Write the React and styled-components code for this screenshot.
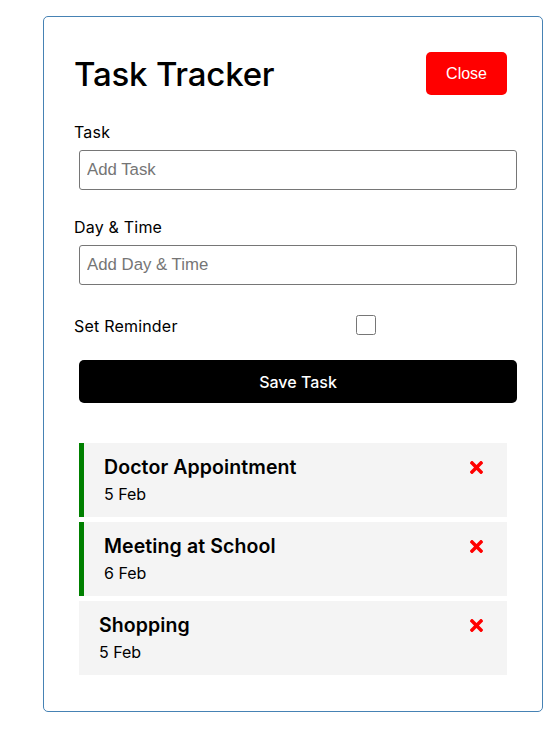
import React from "react";
import styled, { createGlobalStyle } from "styled-components";
import { FaTimes } from "react-icons/fa";

const GlobalStyle = createGlobalStyle`
  * {
    box-sizing: border-box;
  }

  body {
    margin: 0;
    background: #fff;
    font-family: Inter, "Open Sans", sans-serif;
    color: #000;
  }
`;

const Container = styled.div`
  width: 500px;
  min-height: 300px;
  margin: 16px 0 0 43px;
  padding: 30px 30px 31px;
  border: 1px solid steelblue;
  border-radius: 5px;
`;

const Header = styled.header`
  display: flex;
  justify-content: space-between;
  align-items: center;
  margin-bottom: 20px;
`;

const Title = styled.h1`
  margin: 0;
  font-size: 33px;
  font-weight: 500;
  letter-spacing: -0.2px;
`;

const Button = styled.button`
  display: ${(p) => (p.$block ? "block" : "inline-block")};
  width: ${(p) => (p.$block ? "100%" : "auto")};
  height: 43px;
  margin: 5px;
  padding: 0 20px;
  border: none;
  border-radius: 5px;
  background: ${(p) => p.$color || "#000"};
  color: #fff;
  font-family: ${(p) =>
    p.$block ? "Inter, sans-serif" : '"Liberation Sans", Arial, sans-serif'};
  font-size: 16px;
  font-weight: ${(p) => (p.$block ? 500 : 400)};
  cursor: pointer;
`;

const Form = styled.form`
  margin-bottom: 40px;
`;

const FormControl = styled.div`
  display: flow-root;
  margin: 20px 0;
`;

const Label = styled.label`
  display: block;
  font-size: 16px;
  line-height: 25px;
  letter-spacing: 0.2px;
`;

const Input = styled.input`
  display: block;
  width: 100%;
  height: 40px;
  margin: 5px;
  padding: 3px 7px;
  border: 1px solid #767676;
  border-radius: 3px;
  font-family: "Liberation Sans", Arial, sans-serif;
  font-size: 16.8px;

  &::placeholder {
    color: #757575;
  }
`;

const CheckRow = styled.div`
  display: flex;
  align-items: center;
  height: 30px;
  margin: 20px 0;

  ${Label} {
    flex: 1;
    padding-top: 2px;
  }
`;

const CheckCell = styled.div`
  flex: 2;
  display: flex;
  justify-content: center;
`;

const Checkbox = styled.input`
  width: 20px;
  height: 20px;
  margin: 0;
`;

const Task = styled.div`
  margin: 5px;
  padding: 10px 20px;
  background: #f4f4f4;
  border-left: ${(p) => (p.$reminder ? "5px solid green" : "none")};
  cursor: pointer;
`;

const TaskTitle = styled.h3`
  display: flex;
  justify-content: space-between;
  align-items: center;
  margin: 0;
  font-size: 19.5px;
  font-weight: 600;
  line-height: 28px;
  letter-spacing: 0.1px;

  svg {
    margin-right: 1px;
    color: red;
  }
`;

const TaskDay = styled.p`
  margin: 0;
  font-size: 16px;
  line-height: 26px;
`;

const tasks = [
  { id: 1, text: "Doctor Appointment", day: "5 Feb", reminder: true },
  { id: 2, text: "Meeting at School", day: "6 Feb", reminder: true },
  { id: 3, text: "Shopping", day: "5 Feb", reminder: false },
];

const App = () => {
  return (
    <>
      <GlobalStyle />
      <Container>
        <Header>
          <Title>Task Tracker</Title>
          <Button type="button" $color="red">
            Close
          </Button>
        </Header>

        <Form onSubmit={(e) => e.preventDefault()}>
          <FormControl>
            <Label>Task</Label>
            <Input type="text" placeholder="Add Task" />
          </FormControl>
          <FormControl>
            <Label>Day &amp; Time</Label>
            <Input type="text" placeholder="Add Day & Time" />
          </FormControl>
          <CheckRow>
            <Label>Set Reminder</Label>
            <CheckCell>
              <Checkbox type="checkbox" />
            </CheckCell>
          </CheckRow>
          <Button type="submit" $block>
            Save Task
          </Button>
        </Form>

        {tasks.map((task) => (
          <Task key={task.id} $reminder={task.reminder}>
            <TaskTitle>
              {task.text}
              <FaTimes size={19} />
            </TaskTitle>
            <TaskDay>{task.day}</TaskDay>
          </Task>
        ))}
      </Container>
    </>
  );
};

export default App;
